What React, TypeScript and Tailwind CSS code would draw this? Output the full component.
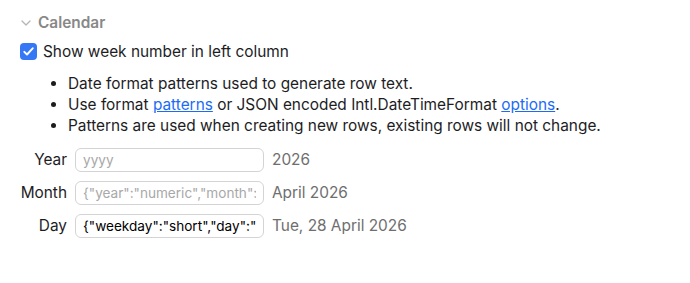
import React from 'react';

const rows = [
  { label: 'Year', value: '', placeholder: 'yyyy', preview: '2026' },
  { label: 'Month', value: '', placeholder: '{"year":"numeric","month":"long"}', preview: 'April 2026' },
  { label: 'Day', value: '{"weekday":"short","day":"numeric","month":"long","year":"numeric"}', placeholder: '', preview: 'Tue, 28 April 2026' },
];

export default function App() {
  return (
    <div className="w-[690px] h-[283px] bg-white text-[#1d1d1f] pl-5 pt-[13px]" style={{ fontFamily: 'Inter, "Noto Sans", sans-serif' }}>
      <div className="flex items-center gap-[7px] h-[19px]">
        <svg width="10" height="6" viewBox="0 0 10 6" className="ml-[1px]">
          <path d="M1 1 L5 5 L9 1" fill="none" stroke="#b5b5b5" strokeWidth="1.3" strokeLinecap="round" strokeLinejoin="round" />
        </svg>
        <span className="text-[15.4px] font-semibold text-[#888888]">Calendar</span>
      </div>

      <label className="flex items-center gap-[6px] mt-[10px] h-[19px]">
        <span className="w-[17px] h-[17px] rounded-[4px] bg-[#3478f6] flex items-center justify-center">
          <svg width="11" height="9" viewBox="0 0 11 9">
            <path d="M1.3 4.8 L4 7.5 L9.7 1.3" fill="none" stroke="white" strokeWidth="1.9" strokeLinecap="round" strokeLinejoin="round" />
          </svg>
        </span>
        <span className="text-[15.4px]">Show week number in left column</span>
      </label>

      <ul className="list-disc pl-[48px] mt-[12px] text-[15.4px] leading-[21px]">
        <li>Date format patterns used to generate row text.</li>
        <li>
          Use format <a className="text-[#1a6cf5] underline">patterns</a> or JSON encoded Intl.DateTimeFormat{' '}
          <a className="text-[#1a6cf5] underline">options</a>.
        </li>
        <li>Patterns are used when creating new rows, existing rows will not change.</li>
      </ul>

      <div className="grid grid-cols-[47px_189px_auto] gap-x-[8px] gap-y-[9px] items-center mt-[12px]">
        {rows.map((r) => (
          <React.Fragment key={r.label}>
            <span className="text-[15.4px] text-right">{r.label}</span>
            <input
              readOnly
              value={r.value}
              placeholder={r.placeholder}
              className="h-[24px] w-[189px] rounded-[6px] border border-[#d4d4d4] px-[7px] text-[13.6px] text-black placeholder:text-[#a8a8a8] outline-none"
            />
            <span className="text-[15.4px] text-[#6e6e6e]">{r.preview}</span>
          </React.Fragment>
        ))}
      </div>
    </div>
  );
}
